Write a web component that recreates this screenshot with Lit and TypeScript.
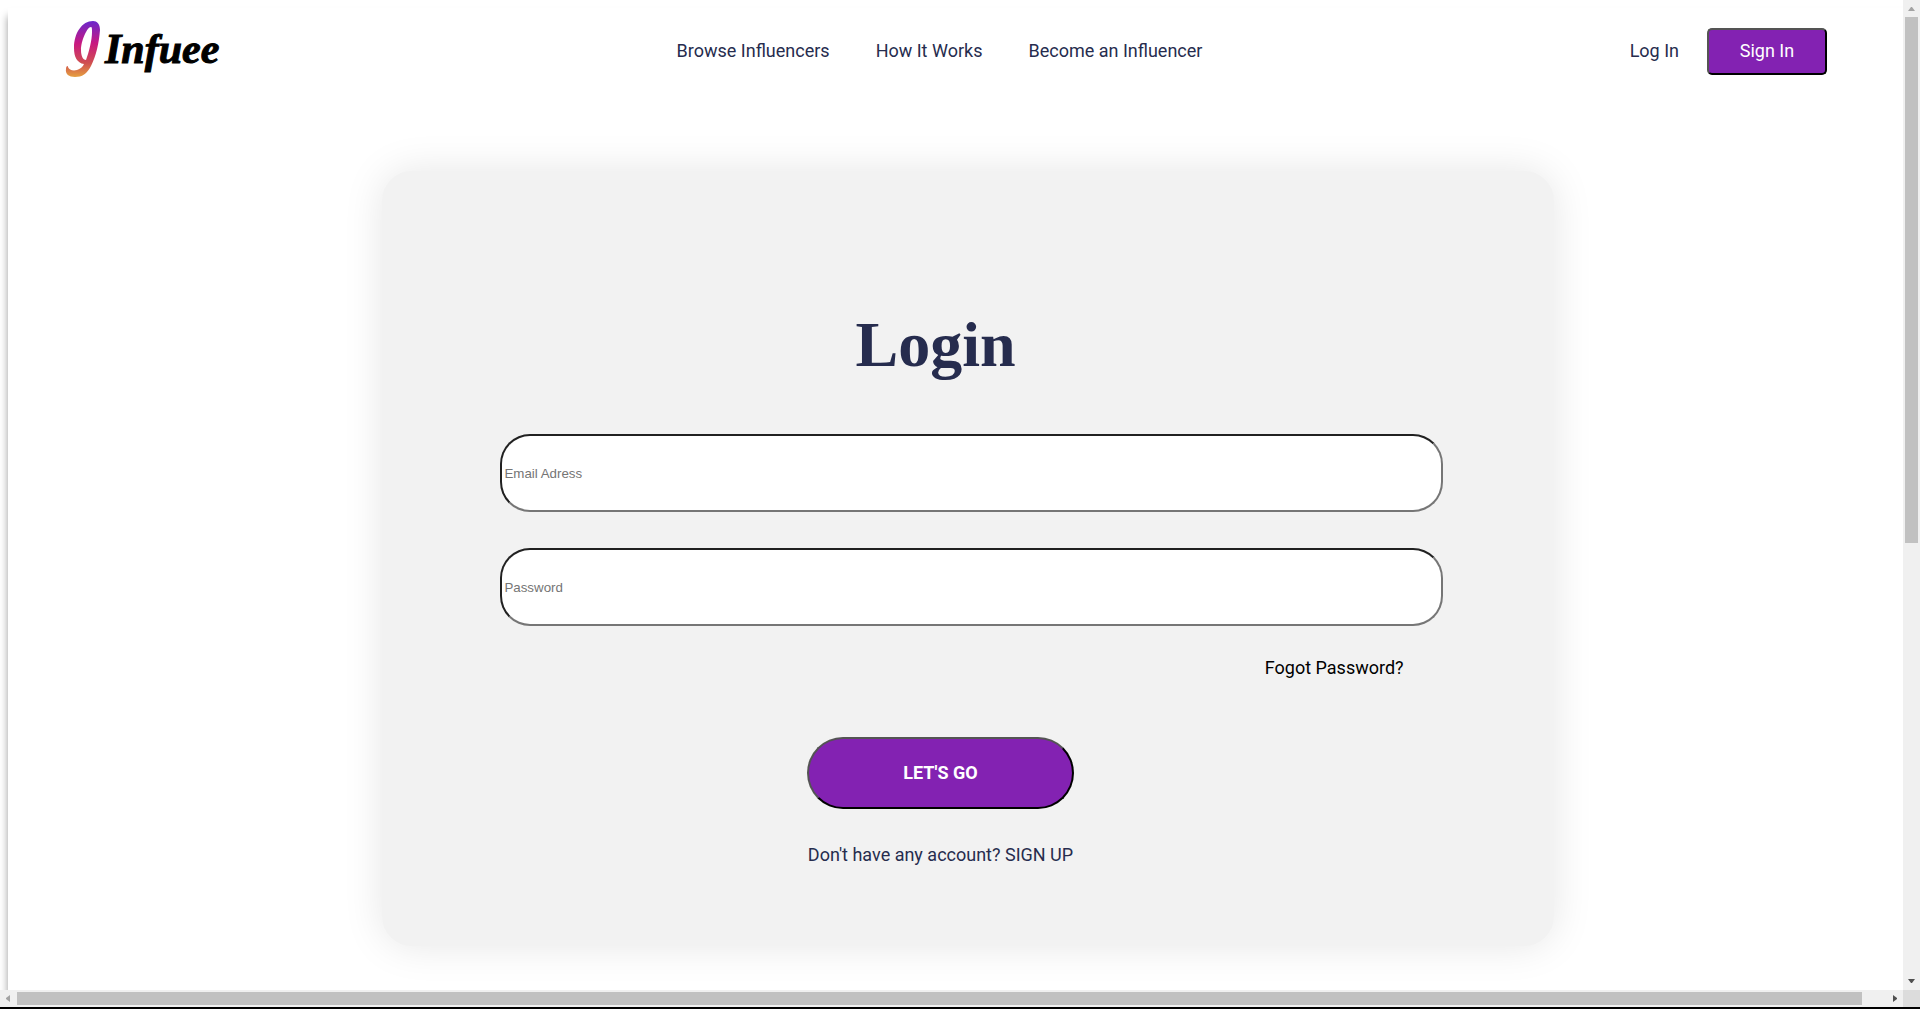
import { LitElement, html, css, svg } from "lit";
import { customElement } from "lit/decorators.js";

const arrow = (d: string) => html`<svg class="arrow" viewBox="0 0 17 17" aria-hidden="true">${svg`<path d=${d} fill="currentColor" />`}</svg>`;

@customElement("site-header")
class SiteHeader extends LitElement {
  static styles = css`
    :host {
      display: block;
      font-family: Roboto, sans-serif;
      font-size: 18px;
      line-height: 22px;
    }
    .bar {
      display: grid;
      grid-template-columns: 1fr auto 1fr;
      align-items: center;
      height: 86px;
      padding: 0 101px 0 57px;
    }
    .logo {
      display: flex;
      align-items: flex-start;
      width: max-content;
      padding-bottom: 4px;
      color: #000;
      text-decoration: none;
    }
    .mark {
      width: 36px;
      height: 56px;
    }
    .word {
      padding: 4px 0 0 4px;
      font: italic 700 42px/48px "Liberation Serif", serif;
      -webkit-text-stroke: 1px #000;
    }
    .nav {
      display: flex;
      gap: 46px;
      padding-right: 13px;
    }
    .link {
      color: #262c4e;
      text-decoration: none;
    }
    .account {
      display: flex;
      justify-content: flex-end;
      align-items: center;
      gap: 28px;
    }
    .signin {
      width: 120px;
      height: 47px;
      border: 2px outset #000;
      border-radius: 5px;
      background: #8322b2;
      color: #fff;
      font: inherit;
    }
  `;

  render() {
    return html`
      <header class="bar">
        <a class="logo" href="#" aria-label="Infuee">
          <svg class="mark" viewBox="0 0 36 56" aria-hidden="true">
            <defs>
              <linearGradient id="ink" x1="0" y1="0" x2="0" y2="1">
                <stop offset="0" stop-color="#6a28cc" />
                <stop offset="0.4" stop-color="#c81880" />
                <stop offset="0.75" stop-color="#cf4f50" />
                <stop offset="1" stop-color="#e6a040" />
              </linearGradient>
            </defs>
            <path
              fill="url(#ink)"
              fill-rule="evenodd"
              d="M28 0C32 0 35 3 35 9C34 22 31 35 26 45C22 53 17 56 10 56C4 56 0 53 1 48C1 45 3 44 3 46C4 49 8 50 12 49C15 48 18 46 19 43C12 42 9 36 9 27C9 12 17 0 28 0ZM26 6C22 6 16 20 16 29C16 35 18 39 21 39C24 31 27 19 27 11C27 8 27 6 26 6Z"
            />
          </svg>
          <span class="word">Infuee</span>
        </a>
        <nav class="nav">
          <a class="link" href="#">Browse Influencers</a>
          <a class="link" href="#">How It Works</a>
          <a class="link" href="#">Become an Influencer</a>
        </nav>
        <div class="account">
          <a class="link" href="#">Log In</a>
          <button class="signin" type="button">Sign In</button>
        </div>
      </header>
    `;
  }
}

@customElement("login-card")
class LoginCard extends LitElement {
  static styles = css`
    :host {
      display: block;
      font-family: Roboto, sans-serif;
      font-size: 18px;
      line-height: 22px;
      color: #262c4e;
    }
    .card {
      box-sizing: border-box;
      width: 61%;
      margin: 77px auto 0;
      padding: 136px 111px 80px 118px;
      border-radius: 30px;
      background: #f2f2f2;
      box-shadow: 0 0 40px rgba(0, 0, 0, 0.1);
      display: flex;
      flex-direction: column;
    }
    .title {
      margin: 0 72px 51px 0;
      text-align: center;
      font: 700 64px/76px "Liberation Serif", serif;
    }
    .field {
      box-sizing: border-box;
      width: 100%;
      height: 78px;
      margin-bottom: 36px;
      padding: 1px 2px;
      border: 2px inset #767676;
      border-radius: 30px;
      background: #fff;
      font-family: "Liberation Sans", Arial, sans-serif;
    }
    .field::placeholder {
      color: #757575;
    }
    .forgot {
      align-self: flex-end;
      margin: -5px 39px 0 0;
      color: #000;
      text-decoration: none;
    }
    .actions {
      display: flex;
      flex-direction: column;
      align-items: center;
      margin: 58px 62px 0 0;
      gap: 35px;
    }
    .go {
      width: 267px;
      height: 72px;
      border: 2px outset #000;
      border-radius: 36px;
      background: #8322b2;
      color: #fff;
      font: 700 18px/22px Roboto, sans-serif;
    }
    .signup {
      color: inherit;
      text-decoration: none;
    }
  `;

  render() {
    return html`
      <form class="card">
        <h1 class="title">Login</h1>
        <input class="field" type="email" aria-label="Email address" placeholder="Email Adress" />
        <input class="field" type="password" aria-label="Password" placeholder="Password" />
        <a class="forgot" href="#">Fogot Password?</a>
        <div class="actions">
          <button class="go" type="button">LET'S GO</button>
          <a class="signup" href="#">Don't have any account? SIGN UP</a>
        </div>
      </form>
    `;
  }
}

@customElement("app-root")
class AppRoot extends LitElement {
  static styles = css`
    :host {
      display: block;
    }
    .window {
      box-sizing: border-box;
      display: grid;
      grid-template: minmax(0, 1fr) 17px / minmax(0, 1fr) 17px;
      height: 100vh;
      border-bottom: 2px solid #000;
      background: #dcdcdc;
    }
    .view {
      overflow: hidden;
      background: #fff;
    }
    .sheet {
      width: 100vw;
      height: 200vh;
      margin: 8px 0 0 8px;
      background: #fff;
      box-shadow: 0 8px 8px rgba(0, 0, 0, 0.4);
    }
    .track {
      display: flex;
      background: #f0f0f0;
      color: #505050;
    }
    .vertical {
      flex-direction: column;
    }
    .arrow {
      flex: none;
      width: 17px;
      height: 17px;
    }
    .start {
      display: flex;
      color: #a3a3a3;
    }
    .lane {
      display: flex;
      flex: 1;
    }
    .vertical .lane {
      flex-direction: column;
      padding: 0 2px;
    }
    .horizontal .lane {
      padding: 2px 0;
    }
    .thumb {
      background: #c1c1c1;
    }
    .vertical .thumb {
      height: 55%;
    }
    .horizontal .thumb {
      width: 98.7%;
    }
  `;

  render() {
    return html`
      <div class="window">
        <main class="view">
          <div class="sheet">
            <site-header></site-header>
            <login-card></login-card>
          </div>
        </main>
        <div class="track vertical" aria-hidden="true">
          <span class="start">${arrow("M5 11L8 7H9L12 11Z")}</span>
          <div class="lane"><div class="thumb"></div></div>
          ${arrow("M5 6H12L9 10H8Z")}
        </div>
        <div class="track horizontal" aria-hidden="true">
          <span class="start">${arrow("M10 5L6 8V9L10 12Z")}</span>
          <div class="lane"><div class="thumb"></div></div>
          ${arrow("M7 5L11 8V9L7 12Z")}
        </div>
      </div>
    `;
  }
}
